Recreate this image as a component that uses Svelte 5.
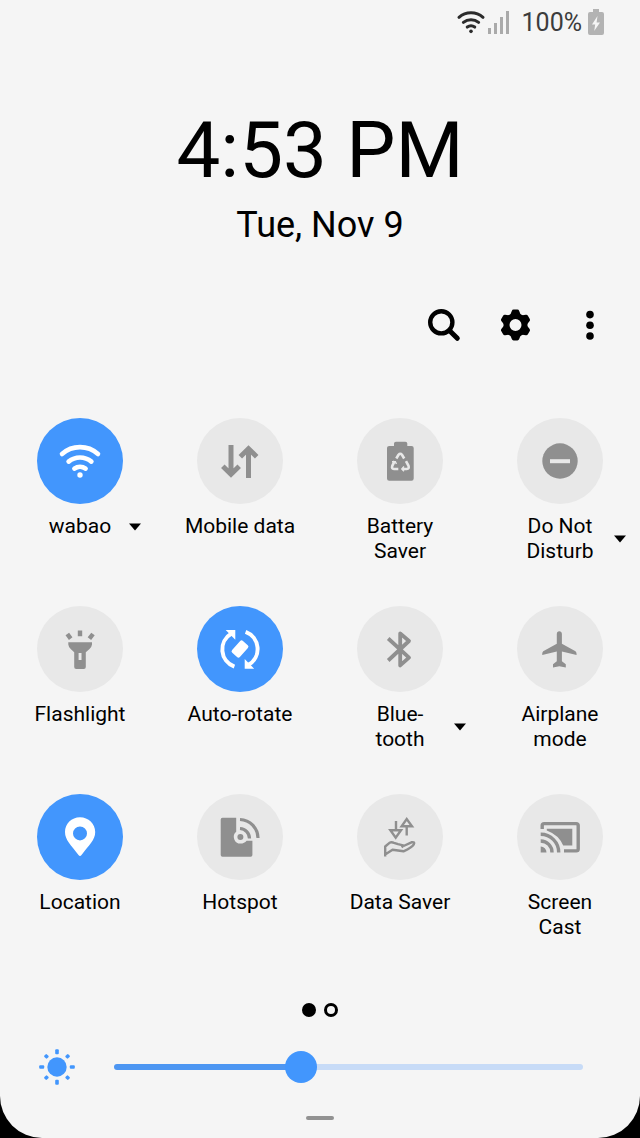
<script>
  let brightness = $state(100);
  const maxBrightness = 255;
  let fill = $derived((brightness / maxBrightness) * 100);

  let tiles = $state([
    { icon: 'wifi', lines: ['wabao'], on: true, more: true },
    { icon: 'data', lines: ['Mobile data'], on: false },
    { icon: 'battery', lines: ['Battery', 'Saver'], on: false },
    { icon: 'dnd', lines: ['Do Not', 'Disturb'], on: false, more: true },
    { icon: 'flashlight', lines: ['Flashlight'], on: false },
    { icon: 'rotate', lines: ['Auto-rotate'], on: true },
    { icon: 'bluetooth', lines: ['Blue-', 'tooth'], on: false, more: true },
    { icon: 'airplane', lines: ['Airplane', 'mode'], on: false },
    { icon: 'location', lines: ['Location'], on: true },
    { icon: 'hotspot', lines: ['Hotspot'], on: false },
    { icon: 'saver', lines: ['Data Saver'], on: false },
    { icon: 'cast', lines: ['Screen', 'Cast'], on: false }
  ]);

  const teeth = [0, 60, 120, 180, 240, 300];
  const rays = [0, 45, 90, 135, 180, 225, 270, 315];
</script>

{#snippet wifi()}
  <g fill="none" stroke="currentColor" stroke-width="4.6" stroke-linecap="round">
    <path d="M12 23A27 27 0 0 1 48 23" />
    <path d="M18.6 30.6A18 18 0 0 1 41.4 30.6" />
    <path d="M24.4 37.6A9.5 9.5 0 0 1 35.6 37.6" />
  </g>
  <circle cx="30" cy="44" r="2.7" fill="currentColor" />
{/snippet}

{#snippet glyph(name)}
  {#if name === 'wifi'}
    {@render wifi()}
  {:else if name === 'data'}
    <g fill="none" stroke="currentColor" stroke-width="5">
      <path d="M21 14V44M12.8 35.3L21 43.3L29.2 35.3" />
      <path d="M38.5 47V17M30.3 25.7L38.5 17.7L46.7 25.7" />
    </g>
  {:else if name === 'battery'}
    <path fill="currentColor" d="M24 15V12.5Q24 10.7 26 10.7H35.3Q37.3 10.7 37.3 12.5V15H41.5Q43.7 15 43.7 17V47.5Q43.7 49.7 41.5 49.7H19.2Q17 49.7 17 47.5V17Q17 15 19.2 15Z" />
    <g fill="none" stroke="#e8e8e8" stroke-width="2.6">
      <path d="M26.3 27.5L28.5 23.8Q30.3 21.8 32 23.8L34.2 27.5" />
      <path d="M24.6 30.2L22.3 34.8Q21.3 37.8 24 38H28.3" />
      <path d="M36 30.2L38.5 34.8Q39.5 37.8 36.7 38H32.4" />
      <path d="M22 30.8H25.4L26.4 33M34 35.5L31.8 38L34 40.3" stroke-width="1.4" />
    </g>
  {:else if name === 'dnd'}
    <circle cx="30" cy="30" r="17.7" fill="currentColor" />
    <rect x="20" y="28.2" width="20" height="4" fill="#e8e8e8" />
  {:else if name === 'flashlight'}
    <path fill="currentColor" fill-rule="evenodd" d="M18.3 23.3H42V25.5Q41.5 28.5 39.5 30L35.8 33.3V48Q35.8 50 33.8 50H26.2Q24.2 50 24.2 48V33.3L20.7 30Q18.7 28.5 18.3 25.5ZM28.6 34V41H31.5V34Z" />
    <path fill="none" stroke="currentColor" stroke-width="4.4" d="M30 11.5V17.3M17.3 15L20.7 19.6M43 15L39.4 19.6" />
  {:else if name === 'rotate'}
    <g fill="none" stroke="currentColor" stroke-width="4">
      <path d="M24.4 47.6A18.3 18.3 0 0 1 21.5 14.5" />
      <path d="M35.6 12.8A18.3 18.3 0 0 1 38.5 45.8" />
    </g>
    <path fill="currentColor" d="M15.7 11H25.3V20.8ZM44.2 49.7H34.7V40Z" />
    <rect x="22" y="24.8" width="16" height="10.4" rx="2" fill="currentColor" transform="rotate(-48 30 30)" />
  {:else if name === 'bluetooth'}
    <path fill="none" stroke="currentColor" stroke-width="3.8" stroke-linejoin="round" d="M18.2 19.5L39 38.6L30.2 46.4V14.4L39 22L18.2 41.5" />
  {:else if name === 'airplane'}
    <path fill="currentColor" d="M29.3 12.2Q31.7 12.2 31.9 15V24.8L45.5 32.2Q46.8 33.2 46.6 36L31.9 32.6V42.3L35.8 45.3V48.6L29.3 47.2L23 48.6V45.3L26.8 42.3V32.6L12.2 36Q12 33.2 13.2 32.2L26.8 24.8V15Q26.9 12.2 29.3 12.2Z" />
  {:else if name === 'location'}
    <path fill="currentColor" fill-rule="evenodd" d="M30 10.3C21.5 10.3 15 17 15 25C15 33 21 38 28.5 48Q30 49.8 31.5 48C39 38 45.2 33 45.2 25C45.2 17 38.5 10.3 30 10.3ZM30 19.4A7 7 0 1 1 30 33.4A7 7 0 1 1 30 19.4Z" />
  {:else if name === 'hotspot'}
    <path fill="currentColor" d="M12.5 10.7H26.2V24.8A6.7 6.7 0 0 0 30.4 36.6Q34.5 36.6 36.6 33.8H42.4V48Q42.4 49.7 40.7 49.7H12.5Q10.7 49.7 10.7 48V12.5Q10.7 10.7 12.5 10.7Z" />
    <circle cx="30.4" cy="30" r="3" fill="currentColor" />
    <g fill="none" stroke="currentColor" stroke-width="3.2">
      <path d="M30 21.5A10 10 0 0 1 39.5 31.5" />
      <path d="M30 12.5A18.6 18.6 0 0 1 48 31" />
    </g>
  {:else if name === 'saver'}
    <g fill="none" stroke="currentColor" stroke-width="2.4">
      <path d="M26 14V23.3M20.4 23.3H31L25.7 30.6Z" />
      <path d="M36.7 28.5V19.3M31.6 19.3H42L36.7 12Z" />
      <path stroke-linejoin="round" d="M15.2 49.5V39.5L19.5 35.8Q21.5 34.8 24 35.8L28 37.2L33.2 38.3L31.8 40.5M33.5 39L41.5 35.3Q45.3 34.6 43.8 37.3Q42 40.3 33.5 44.3L22.5 42.8L15.2 47.6" />
    </g>
  {:else if name === 'cast'}
    <g fill="none" stroke="currentColor" stroke-width="3.4">
      <path d="M12.2 22V18.5Q12.2 16.6 14.2 16.6H46.2Q48.2 16.6 48.2 18.5V42Q48.2 43.9 46.2 43.9H34" />
      <path d="M10.7 34A11.3 11.3 0 0 1 22 45.5" />
      <path d="M10.7 27.3A18 18 0 0 1 28.7 45.5" />
    </g>
    <path fill="currentColor" d="M10.7 39.5A6 6 0 0 1 16.5 45.5H10.7ZM16.8 21.7H42.3V38.5H33.2Q29 28 16.8 23.4Z" />
  {/if}
{/snippet}

<div class="panel">
  <div class="status">
    <svg class="status-wifi" viewBox="8 12 44 36">{@render wifi()}</svg>
    <svg class="signal" viewBox="0 0 22 24" fill="#aaaaaa">
      <rect x="0" y="18" width="3" height="6" />
      <rect x="6" y="13" width="3" height="11" />
      <rect x="12" y="7" width="3" height="17" />
      <rect x="18" y="1" width="3" height="23" />
    </svg>
    <span class="percent">100%</span>
    <svg class="power" viewBox="0 0 16 26">
      <path fill="#b3b3b3" d="M5 0H11V3H14Q16 3 16 5V24Q16 26 14 26H2Q0 26 0 24V5Q0 3 2 3H5Z" />
      <path fill="#f5f5f5" d="M9.5 7L4 15.5H7.2L6.2 22L12 13.4H8.6Z" />
    </svg>
  </div>

  <header>
    <h1>4:53 PM</h1>
    <p class="date">Tue, Nov 9</p>
  </header>

  <div class="tools">
    <button aria-label="Search">
      <svg viewBox="0 0 48 48" fill="none" stroke="#000" stroke-width="4.4">
        <circle cx="21.3" cy="21.3" r="11.1" />
        <path d="M29.4 29.4L37.3 37.3" stroke-width="5" stroke-linecap="round" />
      </svg>
    </button>
    <button aria-label="Settings">
      <svg viewBox="0 0 48 48">
        <circle cx="22.5" cy="24" r="9" fill="none" stroke="#000" stroke-width="6" />
        {#each teeth as angle}
          <path d="M17 14.5L18.8 10Q19.3 8.6 20.6 8.6H24.4Q25.7 8.6 26.2 10L28 14.5Z" transform="rotate({angle} 22.5 24)" />
        {/each}
      </svg>
    </button>
    <button aria-label="More options">
      <svg viewBox="0 0 48 48">
        <circle cx="24" cy="13.6" r="3.8" />
        <circle cx="24" cy="24.3" r="3.8" />
        <circle cx="24" cy="35" r="3.8" />
      </svg>
    </button>
  </div>

  <div class="tiles">
    {#each tiles as tile}
      <div class="tile">
        <button
          class="circle"
          class:on={tile.on}
          aria-label={tile.lines.join(' ')}
          aria-pressed={tile.on}
          onclick={() => (tile.on = !tile.on)}
        >
          <svg viewBox="0 0 60 60">{@render glyph(tile.icon)}</svg>
        </button>
        <div class="label" class:more={tile.more} class:single={tile.lines.length === 1}>
          <span class="name">
            {#each tile.lines as line}
              <span>{line}</span>
            {/each}
          </span>
          {#if tile.more}
            <button class="arrow" aria-label="{tile.lines.join(' ')} details">
              <svg viewBox="0 0 12 8"><path d="M0 0.5H12L6 7.5Z" /></svg>
            </button>
          {/if}
        </div>
      </div>
    {/each}
  </div>

  <div class="pages">
    <button class="dot current" aria-label="Page 1"></button>
    <button class="dot" aria-label="Page 2"></button>
  </div>

  <div class="brightness">
    <svg viewBox="0 0 38 38" fill="#4296fd">
      <circle cx="19" cy="19" r="9.7" />
      {#each rays as angle, i}
        <rect x="17.2" y={i % 2 ? 2 : 1.2} width="3.6" height={i % 2 ? 4 : 5} rx="1" transform="rotate({angle} 19 19)" />
      {/each}
    </svg>
    <input
      type="range"
      min="0"
      max={maxBrightness}
      bind:value={brightness}
      aria-label="Brightness"
      style:--fill="{fill}%"
    />
  </div>

  <div class="handle"></div>
</div>

<style>
  :global(body) {
    margin: 0;
    background: #000;
  }

  .panel {
    box-sizing: border-box;
    display: flex;
    flex-direction: column;
    min-height: 100vh;
    padding-bottom: 18px;
    border-radius: 0 0 42px 42px;
    background: #f5f5f5;
    color: #000;
    font-family: Roboto, sans-serif;
  }

  button {
    display: flex;
    align-items: center;
    justify-content: center;
    padding: 0;
    border: none;
    background: none;
    cursor: pointer;
  }

  svg {
    display: block;
  }

  .status {
    display: flex;
    align-items: center;
    justify-content: flex-end;
    height: 44px;
    padding-right: 36px;
    color: #2b2b2b;
  }

  .status-wifi {
    width: 30px;
    height: 24px;
    margin-right: 2px;
  }

  .signal {
    width: 22px;
    height: 24px;
    margin-right: 12px;
  }

  .percent {
    margin-right: 6px;
    color: #3c3c3c;
    font-size: 25px;
  }

  .power {
    width: 16px;
    height: 26px;
  }

  header {
    padding-top: 61px;
    text-align: center;
  }

  h1 {
    margin: 0;
    font-size: 78px;
    font-weight: 400;
    line-height: 92px;
  }

  .date {
    margin: 8px 0 0;
    font-size: 36px;
    line-height: 40px;
  }

  .tools {
    display: flex;
    justify-content: flex-end;
    gap: 25px;
    margin-top: 56px;
    padding-right: 26px;
  }

  .tools svg {
    width: 48px;
    height: 48px;
  }

  .tiles {
    display: grid;
    grid-template-columns: repeat(4, 1fr);
    row-gap: 42px;
    margin-top: 69px;
  }

  .tile {
    display: flex;
    flex-direction: column;
    align-items: center;
    gap: 10px;
  }

  .circle {
    width: 86px;
    height: 86px;
    border-radius: 50%;
    background: #e8e8e8;
    color: #8f8f8f;
  }

  .circle.on {
    background: #4296fd;
    color: #fff;
  }

  .circle svg {
    width: 60px;
    height: 60px;
  }

  .label {
    font-size: 21px;
    line-height: 25px;
    text-align: center;
  }

  .label.more {
    display: grid;
    grid-template-columns: 12px 108px 12px;
    align-items: center;
  }

  .label.more.single {
    grid-template-columns: 12px 98px 12px;
  }

  .label.more .name {
    grid-column: 2;
  }

  .name span {
    display: block;
  }

  .arrow svg {
    width: 12px;
    height: 8px;
  }

  .pages {
    display: flex;
    justify-content: center;
    gap: 8px;
    margin-top: auto;
    padding-top: 24px;
  }

  .dot {
    box-sizing: border-box;
    width: 14px;
    height: 14px;
    border: 3px solid #000;
    border-radius: 50%;
  }

  .dot.current {
    background: #000;
  }

  .brightness {
    display: flex;
    align-items: center;
    gap: 38px;
    margin-top: 31px;
    padding: 0 57px 0 38px;
  }

  .brightness svg {
    flex: none;
    width: 38px;
    height: 38px;
  }

  input {
    flex: 1;
    min-width: 0;
    height: 32px;
    margin: 0;
    appearance: none;
    background: none;
  }

  input::-webkit-slider-runnable-track {
    height: 6px;
    border-radius: 3px;
    background: linear-gradient(to right, #4d96f2 var(--fill), #c7dbf7 var(--fill));
  }

  input::-webkit-slider-thumb {
    width: 32px;
    height: 32px;
    margin-top: -13px;
    border-radius: 50%;
    appearance: none;
    background: #4296fd;
  }

  .handle {
    align-self: center;
    width: 28px;
    height: 4px;
    margin-top: 30px;
    border-radius: 2px;
    background: #929292;
  }
</style>
